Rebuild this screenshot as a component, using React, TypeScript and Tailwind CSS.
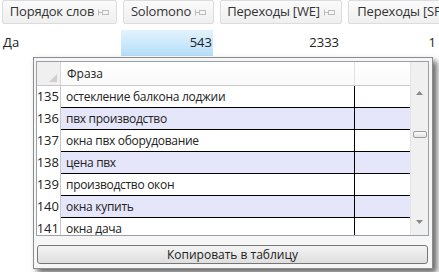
import React from 'react';

const font = "font-['Segoe_UI','Open_Sans','Noto_Sans',sans-serif]";

const Pin = () => (
  <svg width="11" height="7" viewBox="0 0 11 7" className="ml-[4px] shrink-0">
    <path d="M0.5 0.5 V6.5" stroke="#bcbcbc" strokeWidth="1" />
    <path d="M1 3.5 H4" stroke="#bcbcbc" strokeWidth="1" />
    <rect x="4.5" y="1.5" width="6" height="4" fill="none" stroke="#bcbcbc" strokeWidth="1" />
  </svg>
);

const HeaderBtn = ({ label, width }: { label: string; width: string }) => (
  <div
    className={`${width} h-[24px] shrink-0 flex items-center justify-center rounded-[2px] border border-[#dcdcdc] bg-gradient-to-b from-[#fbfbfb] to-[#efefef] text-[13px] tracking-[-0.2px] text-[#333] whitespace-nowrap overflow-hidden`}
  >
    {label}
    <Pin />
  </div>
);

const rows: [number, string][] = [
  [135, 'остекление балкона лоджии'],
  [136, 'пвх производство'],
  [137, 'окна пвх оборудование'],
  [138, 'цена пвх'],
  [139, 'производство окон'],
  [140, 'окна купить'],
  [141, 'окна дача'],
];

export default function App() {
  return (
    <div className={`relative w-[439px] h-[272px] bg-white overflow-hidden ${font}`}>
      {/* column headers */}
      <div className="flex gap-[6px] pl-[2px] w-[520px]">
        <HeaderBtn label="Порядок слов" width="w-[115px]" />
        <HeaderBtn label="Solomono" width="w-[91px]" />
        <HeaderBtn label="Переходы [WE]" width="w-[122px]" />
        <HeaderBtn label="Переходы [SP]" width="w-[122px]" />
      </div>

      {/* data row */}
      <div className="flex mt-[6px] h-[26px] text-[13px] text-[#222]">
        <div className="w-[121px] pl-[3px] flex items-center">Да</div>
        <div className="w-[92px] flex items-center justify-end pr-[1px] bg-gradient-to-b from-[#e3f3fd] to-[#b5def8]">543</div>
        <div className="w-[127px] flex items-center justify-end pr-[1px]">2333</div>
        <div className="w-[97px] flex items-center justify-end pr-[1px]">1</div>
      </div>

      {/* popup */}
      <div className="absolute left-[33px] top-[57px] w-[400px] h-[212px] border border-[#8c8c8c] bg-[#f6f6f6] shadow-[4px_4px_6px_rgba(0,0,0,0.6)] flex flex-col pl-[2px] pr-[3px] pt-[3px]">
        <div className="h-[175px] border border-[#9aa0a8] bg-white flex overflow-hidden">
          <div className="flex-1 flex flex-col min-w-0">
            {/* grid header */}
            <div className="flex h-[24px] shrink-0 border-b border-[#c8c8c8] text-[12px] text-[#222]">
              <div className="w-[24px] shrink-0 bg-[#f0f0f0] border-r border-[#d8d8d8] relative">
                <svg width="8" height="8" className="absolute right-[3px] bottom-[3px]">
                  <path d="M8 0 L8 8 L0 8 Z" fill="#cfcfcf" />
                </svg>
              </div>
              <div className="w-[294px] shrink-0 flex items-center pl-[6px] bg-gradient-to-b from-white to-[#fafafa] border-r border-[#e2e2e2]">
                Фраза
              </div>
              <div className="flex-1 bg-gradient-to-b from-white to-[#fafafa]" />
            </div>
            {/* rows */}
            {rows.map(([n, text], i) => (
              <div key={n} className="flex h-[22px] shrink-0 text-[12px] tracking-[-0.3px] text-[#222]">
                <div className="w-[24px] shrink-0 border-r border-[#c8c8c8] flex items-center justify-end pr-[1px] text-[13px] tracking-normal bg-white">
                  {n}
                </div>
                <div
                  className={`w-[294px] shrink-0 flex items-center pl-[5px] border-b border-r border-black ${
                    i % 2 === 1 ? 'bg-[#e6e6fa]' : 'bg-white'
                  }`}
                >
                  {text}
                </div>
                <div className={`flex-1 border-b border-black ${i % 2 === 1 ? 'bg-[#e6e6fa]' : 'bg-white'}`} />
              </div>
            ))}
          </div>
          {/* scrollbar */}
          <div className="w-[18px] shrink-0 bg-[#f0f0f0] border-l border-[#e4e4e4] relative">
            <svg width="7" height="4" className="absolute left-[5px] top-[29px]">
              <path d="M3.5 0 L7 4 L0 4 Z" fill="#8a8a8a" />
            </svg>
            <div className="absolute left-[2px] top-[69px] w-[14px] h-[7px] rounded-[2px] border border-[#9c9c9c] bg-gradient-to-b from-[#fbfbfb] to-[#e2e2e2]" />
            <svg width="7" height="4" className="absolute left-[5px] bottom-[11px]">
              <path d="M0 0 L7 0 L3.5 4 Z" fill="#8a8a8a" />
            </svg>
          </div>
        </div>
        <div className="mt-[9px] h-[19px] ml-[1px] mr-[1px] rounded-[3px] border border-[#767676] bg-gradient-to-b from-[#f4f4f4] to-[#dedede] flex items-center justify-center text-[12px] text-[#222]">
          Копировать в таблицу
        </div>
      </div>
    </div>
  );
}
